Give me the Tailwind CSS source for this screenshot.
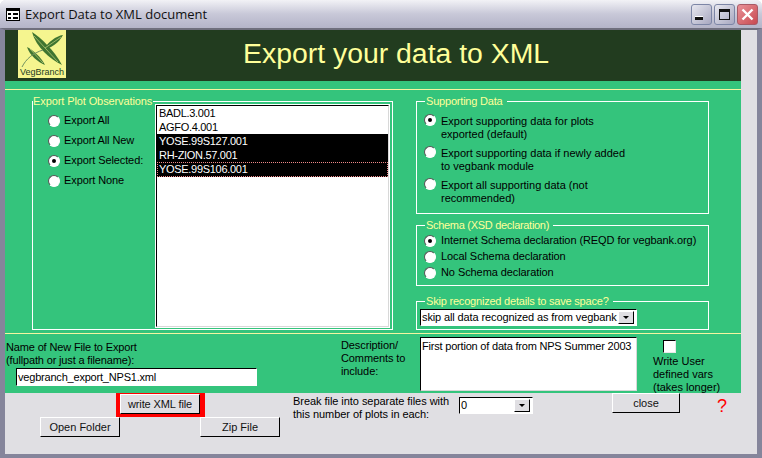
<!DOCTYPE html>
<html lang="en">
<head>
    <meta charset="UTF-8">
    <title>Export Data to XML document</title>
    <script src="https://cdn.jsdelivr.net/npm/@tailwindcss/browser@4"></script>
</head>
<body class="bg-white overflow-hidden">
    <div class="w-[762px] h-[458px] flex flex-col bg-[#e0dfe3] font-['Liberation_Sans',sans-serif] text-[11px] leading-[13px] text-black overflow-hidden rounded-t-[6px]">
        <!-- Title bar -->
        <div class="h-[28px] shrink-0 flex items-center pl-[6px] pr-[4px] bg-gradient-to-b from-[#f2f2f6] via-[#c8c8d8] to-[#b4b4c8]">
            <svg width="14" height="13" viewBox="0 0 14 13" class="mr-[5px]">
                <rect x="0.5" y="0.5" width="13" height="12" fill="#fff" stroke="#000"/>
                <rect x="1" y="1" width="12" height="2" fill="#000"/>
                <rect x="2" y="5" width="3" height="2" fill="#000"/>
                <rect x="7" y="5" width="5" height="2" fill="#000"/>
                <rect x="2" y="9" width="3" height="2" fill="#000"/>
                <rect x="7" y="9" width="5" height="2" fill="#000"/>
            </svg>
            <span class="text-[13px] text-[#111] font-['Open_Sans',sans-serif]">Export Data to XML document</span>
            <div class="ml-auto flex gap-[2px]">
                <div class="w-[21px] h-[21px] rounded-[3px] border border-[#7d86a6] bg-gradient-to-br from-[#e8e8f0] to-[#a8a8c0] relative">
                    <div class="absolute left-[3px] bottom-[4px] w-[8px] h-[4px] bg-[#111] border-t border-white"></div>
                </div>
                <div class="w-[21px] h-[21px] rounded-[3px] border border-[#7d86a6] bg-gradient-to-br from-[#e8e8f0] to-[#a8a8c0] flex items-center justify-center">
                    <div class="w-[11px] h-[11px] border border-[#111] border-t-[3px]"></div>
                </div>
                <div class="w-[21px] h-[21px] rounded-[3px] border border-[#a85a66] bg-gradient-to-br from-[#e89098] to-[#c84850] flex items-center justify-center">
                    <svg width="13" height="13" viewBox="0 0 13 13"><path d="M1.5 1.5 11.5 11.5M11.5 1.5 1.5 11.5" stroke="#fff" stroke-width="2.4"/></svg>
                </div>
            </div>
        </div>

        <!-- Window body -->
        <div class="flex-1 min-h-0 border-l-[5px] border-r-[5px] border-b-[4px] border-t-[2px] border-l-[#85859b] border-r-[#85859b] border-b-[#85859b] border-t-[#6f6f7d]">
            <div class="w-[736px]">
                <!-- Header -->
                <div class="h-[51px] bg-[#223c1f] flex relative">
                    <div class="ml-[13px] w-[48px] h-[48px] bg-[#f5f58f] flex flex-col items-center overflow-hidden">
                        <svg width="48" height="37" viewBox="0 0 48 37" class="shrink-0">
                            <path d="M14 2C23 8 36 20 44 35C32 29 18 17 14 2Z" fill="#3f7530"/>
                            <path d="M45 5C38 6 30 12 25 20C33 18 41 13 45 5Z" fill="#3f7530"/>
                            <path d="M9 17C15 20 23 27 27 35C20 32 12 26 9 17Z" fill="#3f7530"/>
                            <path d="M16 6 40 32M27 18 43 7M12 19 25 33" fill="none" stroke="#d8e08a" stroke-width="0.6"/>
                            <path d="M4 37C8 29 15 23 25 20" fill="none" stroke="#6f9060" stroke-width="1"/>
                        </svg>
                        <span class="text-[9px] leading-[10px] text-[#223c1f]">VegBranch</span>
                    </div>
                    <div class="absolute left-[238px] top-[5px] text-[28.4px] leading-[36px] text-[#ffff99] whitespace-nowrap">Export your data to XML</div>
                </div>

                <!-- Green form area -->
                <div class="h-[312px] bg-[#34c47c] flex flex-col">
                    <div class="h-[8px] shrink-0"></div>
                    <div class="h-px shrink-0 bg-[#f5f5a0]"></div>
                    <div class="h-[243px] shrink-0 pt-[5px] pl-[27px] flex">
                        <fieldset class="w-[361px] h-[235px] border border-white min-w-0 flex-none">
                            <legend class="text-[#ffff99] pr-[1px] tracking-[-0.1px]">Export Plot Observations</legend>
                            <div class="flex">
                                <div class="w-[123px] shrink-0 pl-[15px] pt-[6px] flex flex-col gap-[7px] tracking-[-0.1px]">
                                    <div class="flex items-center h-[13px] gap-[4px]"><div class="w-[12px] h-[12px] rounded-full bg-white border border-[#555] border-r-white border-b-white"></div>Export All</div>
                                    <div class="flex items-center h-[13px] gap-[4px]"><div class="w-[12px] h-[12px] rounded-full bg-white border border-[#555] border-r-white border-b-white"></div>Export All New</div>
                                    <div class="flex items-center h-[13px] gap-[4px]"><div class="w-[12px] h-[12px] rounded-full bg-white border border-[#555] border-r-white border-b-white flex items-center justify-center"><div class="w-[4px] h-[4px] rounded-full bg-black"></div></div>Export Selected:</div>
                                    <div class="flex items-center h-[13px] gap-[4px]"><div class="w-[12px] h-[12px] rounded-full bg-white border border-[#555] border-r-white border-b-white"></div>Export None</div>
                                </div>
                                <div class="w-[233px] h-[222px] -mt-[3px] bg-white border border-black border-r-[#d8d8d8] border-b-[#d8d8d8] tracking-[-0.3px] outline outline-white">
                                    <div class="h-[14px] pl-[2px] flex items-center">BADL.3.001</div>
                                    <div class="h-[14px] pl-[2px] flex items-center">AGFO.4.001</div>
                                    <div class="h-[14px] pl-[2px] flex items-center bg-black text-white">YOSE.99S127.001</div>
                                    <div class="h-[14px] pl-[2px] flex items-center bg-black text-white">RH-ZION.57.001</div>
                                    <div class="h-[15px] pl-[1px] flex items-center bg-black text-white border border-dotted border-[#e88]">YOSE.99S106.001</div>
                                </div>
                            </div>
                        </fieldset>

                        <div class="ml-[23px] w-[293px] flex flex-col">
                            <fieldset class="h-[119px] border border-white min-w-0">
                                <legend class="text-[#ffff99] ml-[8px] pl-[1px] pr-[4px] tracking-[-0.2px]">Supporting Data</legend>
                                <div class="pl-[7px] pt-[7px] flex flex-col gap-[6px]">
                                    <div class="flex gap-[5px]"><div class="-mt-[1px] w-[12px] h-[12px] shrink-0 rounded-full bg-white border border-[#555] border-r-white border-b-white flex items-center justify-center"><div class="w-[4px] h-[4px] rounded-full bg-black"></div></div><span>Export supporting data for plots<br>exported (default)</span></div>
                                    <div class="flex gap-[5px]"><div class="-mt-[1px] w-[12px] h-[12px] shrink-0 rounded-full bg-white border border-[#555] border-r-white border-b-white"></div><span>Export supporting data if newly added<br>to vegbank module</span></div>
                                    <div class="flex gap-[5px]"><div class="-mt-[1px] w-[12px] h-[12px] shrink-0 rounded-full bg-white border border-[#555] border-r-white border-b-white"></div><span>Export all supporting data (not<br>recommended)</span></div>
                                </div>
                            </fieldset>
                            <fieldset class="mt-[5px] h-[67px] border border-white min-w-0">
                                <legend class="text-[#ffff99] ml-[8px] pl-[1px] pr-[4px] tracking-[-0.3px]">Schema (XSD declaration)</legend>
                                <div class="pl-[7px] pt-[2px] flex flex-col gap-[3px] tracking-[-0.08px]">
                                    <div class="flex items-center h-[13px] gap-[5px]"><div class="w-[12px] h-[12px] shrink-0 rounded-full bg-white border border-[#555] border-r-white border-b-white flex items-center justify-center"><div class="w-[4px] h-[4px] rounded-full bg-black"></div></div>Internet Schema declaration (REQD for vegbank.org)</div>
                                    <div class="flex items-center h-[13px] gap-[5px]"><div class="w-[12px] h-[12px] shrink-0 rounded-full bg-white border border-[#555] border-r-white border-b-white"></div>Local Schema declaration</div>
                                    <div class="flex items-center h-[13px] gap-[5px]"><div class="w-[12px] h-[12px] shrink-0 rounded-full bg-white border border-[#555] border-r-white border-b-white"></div>No Schema declaration</div>
                                </div>
                            </fieldset>
                            <fieldset class="mt-[9px] h-[35px] border border-white min-w-0">
                                <legend class="text-[#ffff99] ml-[8px] pl-[1px] pr-[4px] tracking-[-0.2px]">Skip recognized details to save space?</legend>
                                <div class="ml-[3px] mt-[1px] w-[217px] h-[17px] bg-white border border-black border-r-white border-b-white flex items-center pl-[1px] pr-[2px] justify-between">
                                    <span class="whitespace-nowrap tracking-[-0.12px]">skip all data recognized as from vegbank</span>
                                    <div class="w-[16px] h-[13px] shrink-0 bg-[#e0dfe3] border border-white border-r-black border-b-black flex items-center justify-center"><div class="border-x-[3px] border-x-transparent border-t-[3px] border-t-black"></div></div>
                                </div>
                            </fieldset>
                        </div>
                    </div>
                    <div class="h-px shrink-0 bg-[#f5f5a0]"></div>
                    <div class="flex-1 flex">
                        <div class="w-[336px] shrink-0 pl-[1px] pt-[7px]">
                            <div class="tracking-[-0.15px]">Name of New File to Export<br>(fullpath or just a filename):</div>
                            <div class="ml-[10px] mt-[1px] w-[241px] h-[18px] bg-white border border-black border-r-white border-b-white pl-[1px] flex items-center tracking-[-0.2px]">vegbranch_export_NPS1.xml</div>
                        </div>
                        <div class="w-[79px] shrink-0 pt-[5px] tracking-[-0.1px]">Description/<br>Comments to<br>include:</div>
                        <div class="w-[217px] h-[54px] mt-[3px] shrink-0 bg-white border border-black border-r-[#d8d8d8] border-b-[#d8d8d8] pl-[1px] pt-[2px] whitespace-nowrap tracking-[-0.2px]">First portion of data from NPS Summer 2003</div>
                        <div class="ml-[16px] pt-[6px]">
                            <div class="ml-[10px] w-[13px] h-[13px] bg-white border border-black border-r-[#e8e8e8] border-b-[#e8e8e8]"></div>
                            <div class="mt-[2px]">Write User<br>defined vars<br>(takes longer)</div>
                        </div>
                    </div>
                </div>

                <!-- Bottom button strip -->
                <div class="flex relative">
                    <div class="w-[288px] shrink-0 flex flex-col">
                        <div class="ml-[111px] w-[89px] h-[24px] border-[#f00] border-t-[2px] border-b-[3px] border-l-[4px] border-r-[5px] shrink-0 bg-[#e0dfe3]">
                            <div class="w-[80px] h-[20px] -mt-[1px] flex items-center justify-center border border-white border-r-black border-b-black text-[#111] tracking-[-0.1px]">write XML file</div>
                        </div>
                        <div class="flex ml-[35px] gap-[80px]">
                            <div class="w-[80px] h-[20px] shrink-0 flex items-center justify-center border border-white border-r-black border-b-black text-[#111]">Open Folder</div>
                            <div class="w-[80px] h-[20px] shrink-0 flex items-center justify-center border border-white border-r-black border-b-black text-[#111]">Zip File</div>
                        </div>
                    </div>
                    <div class="w-[166px] shrink-0 pt-[2px] tracking-[-0.05px]">Break file into separate files with<br>this number of plots in each:</div>
                    <div class="w-[74px] h-[17px] mt-[4px] shrink-0 bg-white border border-black border-r-white border-b-white flex items-center justify-between pl-[1px] pr-[2px]">
                        <span>0</span>
                        <div class="w-[16px] h-[13px] bg-[#e0dfe3] border border-white border-r-black border-b-black flex items-center justify-center"><div class="border-x-[3px] border-x-transparent border-t-[3px] border-t-black"></div></div>
                    </div>
                    <div class="ml-[79px] w-[68px] h-[20px] shrink-0 flex items-center justify-center border border-white border-r-black border-b-black text-[#111]">close</div>
                    <div class="ml-[37px] mt-[3px] text-[18px] leading-[20px] text-[#f00]">?</div>
                </div>
            </div>
        </div>
    </div>
</body>
</html>
